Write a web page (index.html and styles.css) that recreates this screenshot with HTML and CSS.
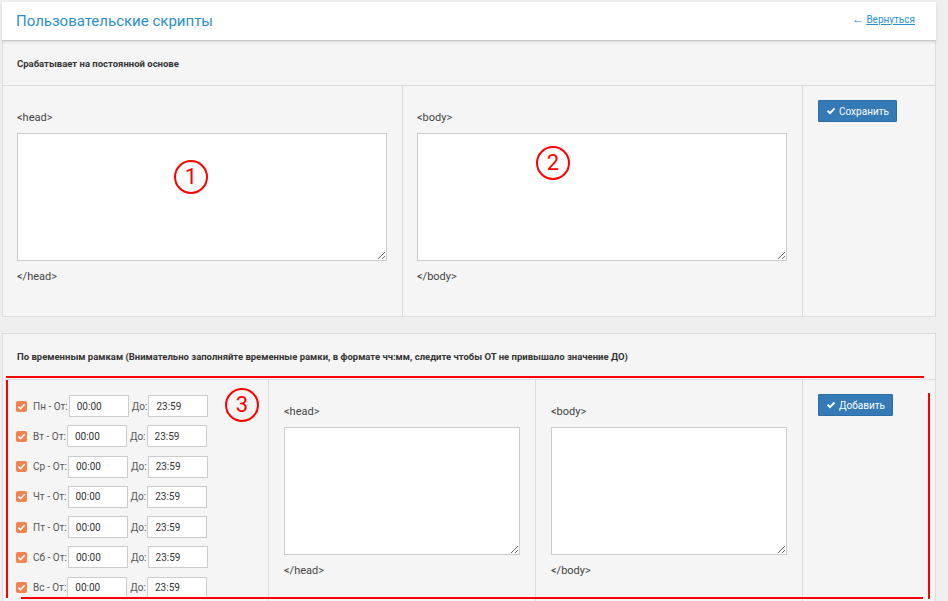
FILE: index.html
```html
<!DOCTYPE html>
<html lang="ru">
<head>
    <meta charset="UTF-8">
    <meta name="viewport" content="width=device-width, initial-scale=1.0">
    <title>Пользовательские скрипты</title>
    <link rel="stylesheet" href="styles.css">
</head>
<body>
    <div class="page">
        <header class="top-bar">
            <h1>Пользовательские скрипты</h1>
            <a href="#" class="back-link"><span class="arrow">&larr;</span> <u>Вернуться</u></a>
        </header>

        <!-- постоянные скрипты -->
        <section class="panel">
            <div class="panel-title">Срабатывает на постоянной основе</div>
            <div class="panel-row row-static">
                <div class="cell">
                    <div class="tag">&lt;head&gt;</div>
                    <textarea class="code-area"></textarea>
                    <div class="tag tag-close">&lt;/head&gt;</div>
                    <span class="mark mark-1">1</span>
                </div>
                <div class="cell">
                    <div class="tag">&lt;body&gt;</div>
                    <textarea class="code-area"></textarea>
                    <div class="tag tag-close">&lt;/body&gt;</div>
                    <span class="mark mark-2">2</span>
                </div>
                <div class="cell cell-actions">
                    <button class="btn-primary">
                        <svg class="check" viewBox="0 0 16 16" width="10" height="10"><path d="M1.5 8.6 L3.6 6.5 L6.3 9.2 L12.6 2.9 L14.7 5 L6.3 13.4 Z" fill="#ffffff"/></svg>
                        Сохранить
                    </button>
                </div>
            </div>
        </section>

        <!-- скрипты по расписанию -->
        <section class="panel panel-timed">
            <div class="panel-title">По временным рамкам (Внимательно заполняйте временные рамки, в формате чч:мм, следите чтобы ОТ не привышало значение ДО)</div>
            <div class="panel-row row-timed">
                <div class="cell cell-days" id="days">
                    <span class="mark mark-3">3</span>
                </div>
                <div class="cell">
                    <div class="tag">&lt;head&gt;</div>
                    <textarea class="code-area"></textarea>
                    <div class="tag tag-close">&lt;/head&gt;</div>
                </div>
                <div class="cell">
                    <div class="tag">&lt;body&gt;</div>
                    <textarea class="code-area"></textarea>
                    <div class="tag tag-close">&lt;/body&gt;</div>
                </div>
                <div class="cell cell-actions">
                    <button class="btn-primary">
                        <svg class="check" viewBox="0 0 16 16" width="10" height="10"><path d="M1.5 8.6 L3.6 6.5 L6.3 9.2 L12.6 2.9 L14.7 5 L6.3 13.4 Z" fill="#ffffff"/></svg>
                        Добавить
                    </button>
                </div>
            </div>
            <div class="outline outline-top"></div>
            <div class="outline outline-left"></div>
            <div class="outline outline-bottom"></div>
            <div class="outline outline-right"></div>
        </section>
    </div>
    <script>
        const days = ['Пн', 'Вт', 'Ср', 'Чт', 'Пт', 'Сб', 'Вс'];
        const daysBox = document.getElementById('days');

        days.forEach((day) => {
            const row = document.createElement('div');
            row.classList.add('day-row');
            row.innerHTML = `
                <span class="day-check"><svg viewBox="0 0 12 12" width="11" height="11"><path d="M2.6 6.2 L4.9 8.4 L9.4 3.6" fill="none" stroke="#ffffff" stroke-width="1.7"/></svg></span>
                <label>${day} - От:</label>
                <input type="text" class="time-input" value="00:00">
                <label>До:</label>
                <input type="text" class="time-input" value="23:59">
            `;
            daysBox.appendChild(row);
        });
    </script>
</body>
</html>
```

FILE: styles.css
```css
body {
    font-family: Roboto, "Liberation Sans", Arial, sans-serif;
    background-color: #efefef;
    margin: 0;
    padding: 0;
    color: #333333;
}
.page {
    padding: 2px 12px 0 2px;
}
.top-bar {
    background-color: #ffffff;
    height: 38px;
    padding: 0 21px 0 14px;
    display: flex;
    align-items: center;
    justify-content: space-between;
    box-shadow: 0 2px 3px rgba(0, 0, 0, 0.12);
    position: relative;
    z-index: 1;
}
.top-bar h1 {
    margin: 0;
    font-size: 15px;
    font-weight: 400;
    color: #2b8fcb;
}
.back-link {
    font-size: 10px;
    color: #2b8fcb;
    text-decoration: none;
    margin-top: -5px;
}
.back-link .arrow {
    font-size: 12px;
}
.panel {
    background-color: #f5f5f5;
    border: 1px solid #dddddd;
    position: relative;
}
.panel-title {
    height: 44px;
    padding: 0 14px;
    display: flex;
    align-items: center;
    font-size: 9.5px;
    font-weight: 700;
    color: #333333;
    border-bottom: 1px solid #dddddd;
}
.panel-timed {
    margin-top: 16px;
}
.panel-timed .panel-title {
    height: 45px;
}
.panel-row {
    display: grid;
}
.row-static {
    grid-template-columns: 400px 400px 1fr;
    height: 230px;
}
.row-timed {
    grid-template-columns: 266px 267px 267px 1fr;
    height: 230px;
}
.cell {
    border-right: 1px solid #dddddd;
    padding: 26px 15px 0 14px;
    position: relative;
}
.cell:last-child {
    border-right: none;
}
.row-timed .cell {
    padding-left: 15px;
}
.tag {
    font-size: 11px;
    color: #444444;
    line-height: 12px;
    margin-bottom: 9px;
}
.tag-close {
    margin: 10px 0 0;
}
.code-area {
    display: block;
    width: 100%;
    height: 128px;
    box-sizing: border-box;
    border: 1px solid #cccccc;
    background-color: #ffffff;
    margin: 0;
}
.row-static .cell-actions,
.row-timed .cell-actions {
    padding: 14px 15px;
}
.btn-primary {
    background-color: #337ab7;
    border: 1px solid #2e6da4;
    color: #ffffff;
    font-family: Roboto, "Liberation Sans", Arial, sans-serif;
    font-size: 10px;
    height: 22px;
    padding: 0 7px;
    border-radius: 1px;
    cursor: pointer;
    display: inline-flex;
    align-items: center;
    gap: 3px;
}
.row-timed .cell.cell-days {
    padding: 15px 0 0 13px;
}
.day-row {
    display: flex;
    align-items: center;
    height: 22px;
    margin-bottom: 8.3px;
    font-size: 10px;
    color: #555555;
}
.day-check {
    width: 11px;
    height: 11px;
    border-radius: 2px;
    background-color: #f0834f;
    display: flex;
    margin-right: 6px;
}
.day-row label {
    margin-right: 1px;
}
.time-input {
    width: 60px;
    height: 22px;
    box-sizing: border-box;
    border: 1px solid #cccccc;
    background-color: #ffffff;
    padding: 0 0 0 7px;
    font-family: Roboto, "Liberation Sans", Arial, sans-serif;
    font-size: 10px;
    color: #333333;
    margin-right: 3px;
}

/* красные пометки поверх формы */
.mark {
    position: absolute;
    width: 30px;
    height: 30px;
    border: 2px solid #ff0000;
    border-radius: 50%;
    color: #ff0000;
    font-size: 22px;
    line-height: 30px;
    text-align: center;
}
.mark-1 {
    left: 171px;
    top: 74px;
}
.mark-2 {
    left: 133px;
    top: 60px;
}
.mark-3 {
    left: 222px;
    top: 8px;
}
.outline {
    position: absolute;
    background-color: #ff0000;
}
.outline-top {
    left: 3px;
    top: 42px;
    width: 918px;
    height: 2px;
}
.outline-left {
    left: 3px;
    top: 46px;
    width: 2px;
    height: 218px;
}
.outline-bottom {
    left: 18px;
    top: 263px;
    width: 902px;
    height: 2px;
}
.outline-right {
    left: 925px;
    top: 59px;
    width: 2px;
    height: 206px;
}
```
